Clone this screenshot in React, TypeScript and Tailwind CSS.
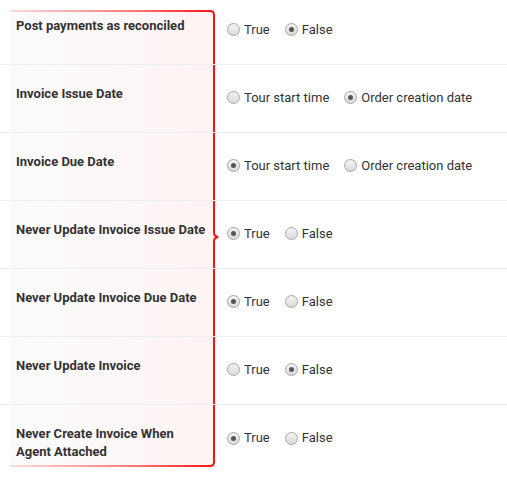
const rows = [
  { label: "Post payments as reconciled", options: ["True", "False"], value: 1 },
  { label: "Invoice Issue Date", options: ["Tour start time", "Order creation date"], value: 1 },
  { label: "Invoice Due Date", options: ["Tour start time", "Order creation date"], value: 0 },
  { label: "Never Update Invoice Issue Date", options: ["True", "False"], value: 0 },
  { label: "Never Update Invoice Due Date", options: ["True", "False"], value: 0 },
  { label: "Never Update Invoice", options: ["True", "False"], value: 1 },
  { label: "Never Create Invoice When Agent Attached", options: ["True", "False"], value: 0 },
]

const Radio = ({ checked }: { checked: boolean }) => (
  <span className="flex h-[13px] w-[13px] shrink-0 items-center justify-center rounded-full border border-[#a8a8a8] bg-gradient-to-b from-[#f4f4f4] to-[#d9d9d9]">
    {checked && <span className="h-[5px] w-[5px] rounded-full bg-[#555]" />}
  </span>
)

const Bracket = () => (
  <svg
    className="pointer-events-none absolute top-0 left-0"
    width="224"
    height="480"
    viewBox="0 0 224 480"
  >
    <defs>
      <linearGradient id="fill" x1="0" x2="1" y1="0" y2="0">
        <stop offset="0" stopColor="#f8f8f8" stopOpacity="0.5" />
        <stop offset="1" stopColor="#ffeded" stopOpacity="0.7" />
      </linearGradient>
      <linearGradient id="edge" x1="10" x2="215" y1="0" y2="0" gradientUnits="userSpaceOnUse">
        <stop offset="0" stopColor="#ff2020" stopOpacity="0.15" />
        <stop offset="0.6" stopColor="#ff2020" stopOpacity="0.6" />
        <stop offset="1" stopColor="#ff1010" stopOpacity="1" />
      </linearGradient>
    </defs>
    <path
      d="M10 11 H210 Q214 11 214 15 V233 Q214 236 218 237 Q214 238 214 241 V462 Q214 466 210 466 H10 Z"
      fill="url(#fill)"
      stroke="none"
    />
    <path
      d="M10 11 H210 Q214 11 214 15 V233 Q214 236 218 237 Q214 238 214 241 V462 Q214 466 210 466 H10"
      fill="none"
      stroke="url(#edge)"
      strokeWidth="2"
    />
  </svg>
)

export default function App() {
  return (
    <div
      className="relative h-[480px] w-[507px] overflow-hidden bg-white"
      style={{ fontFamily: "Roboto, 'Liberation Sans', sans-serif" }}
    >
      <Bracket />
      <div className="relative -mt-[3px]">
        {rows.map((row) => (
          <div
            className="flex h-[68px] border-b border-[#eeeeee] last:border-b-0"
            key={row.label}
          >
            <div className="w-[227px] shrink-0 pt-5 pr-4 pl-4">
              <span className="block text-[13px] leading-[18px] font-bold text-[#333]">
                {row.label}
              </span>
            </div>
            <div className="flex items-center gap-[15px] pb-[2px]">
              {row.options.map((opt, i) => (
                <label className="flex items-center gap-[4px]" key={opt}>
                  <Radio checked={i === row.value} />
                  <span className="text-[13px] text-[#333]">{opt}</span>
                </label>
              ))}
            </div>
          </div>
        ))}
      </div>
    </div>
  )
}
